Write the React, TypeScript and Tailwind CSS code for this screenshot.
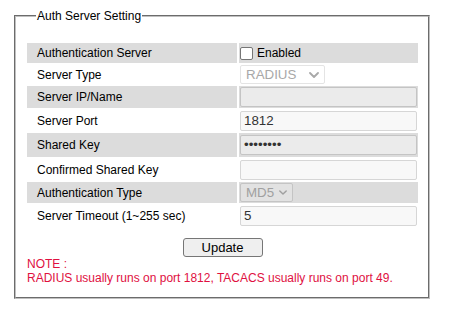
import React from "react";

const F = { fontFamily: '"Liberation Sans", Arial, sans-serif' };

function Chevron({ w, h, color }: { w: number; h: number; color: string }) {
  return (
    <svg width={w} height={h} viewBox="0 0 10 6" fill="none">
      <path d="M1 1 L5 5 L9 1" stroke={color} strokeWidth="1.8" strokeLinecap="round" strokeLinejoin="round" />
    </svg>
  );
}

function Row({
  label,
  h,
  gray,
  children,
}: {
  label: string;
  h: string;
  gray: boolean;
  children?: React.ReactNode;
}) {
  const bg = gray ? "bg-[#dcdcdc]" : "bg-white";
  return (
    <div className={`flex ${h}`}>
      <div className={`w-[210px] flex items-center pl-[10px] text-[12px] text-black ${bg}`}>{label}</div>
      <div className={`ml-[2px] w-[179px] flex items-center pl-[1px] ${bg}`}>{children}</div>
    </div>
  );
}

function TextBox({ value, disabled }: { value: string; disabled?: boolean }) {
  return (
    <div
      className={`w-[177px] h-[20px] flex items-center px-[3px] rounded-[2px] border text-[13.33px] text-[#333] ${
        disabled ? "bg-[#ebebeb] border-[#c4c4c4]" : "bg-[#f8f8f8] border-[#d6d6d6]"
      }`}
    >
      {value}
    </div>
  );
}

export default function App() {
  return (
    <div className="w-[451px] h-[321px] bg-white overflow-hidden" style={F}>
      <fieldset className="ml-[14px] mt-[9px] w-[416px] h-[290px] border-2 [border-style:groove] border-[#c0c0c0] pl-[11px] pr-[10px] pt-[20px]">
        <legend className="ml-[9px] px-[1px] text-[12px] leading-[14px] text-black">Auth Server Setting</legend>
        <div className="flex flex-col w-[391px]">
          <Row label="Authentication Server" h="h-[20px]" gray>
            <div className="flex items-center">
              <div className="w-[13px] h-[13px] border border-[#767676] rounded-[2px] bg-white" />
              <span className="ml-[4px] text-[12px] text-black">Enabled</span>
            </div>
          </Row>
          <Row label="Server Type" h="h-[23px]" gray={false}>
            <div className="w-[85px] h-[19px] flex items-center justify-between pl-[5px] pr-[5px] border border-[#e4e4e4] rounded-[2px] bg-white text-[13.33px] text-[#a8a8a8]">
              <span>RADIUS</span>
              <Chevron w={10} h={6} color="#a8a8a8" />
            </div>
          </Row>
          <Row label="Server IP/Name" h="h-[22px]" gray>
            <TextBox value="" disabled />
          </Row>
          <Row label="Server Port" h="h-[25px]" gray={false}>
            <TextBox value="1812" />
          </Row>
          <Row label="Shared Key" h="h-[24px]" gray>
            <TextBox value="••••••••" disabled />
          </Row>
          <Row label="Confirmed Shared Key" h="h-[25px]" gray={false}>
            <TextBox value="" />
          </Row>
          <Row label="Authentication Type" h="h-[21px]" gray>
            <div className="w-[53px] h-[19px] flex items-center justify-between pl-[5px] pr-[5px] border border-[#c4c4c4] rounded-[2px] bg-[#e2e2e2] text-[13.33px] text-[#a0a0a0]">
              <span>MD5</span>
              <Chevron w={8} h={5} color="#a0a0a0" />
            </div>
          </Row>
          <Row label="Server Timeout (1~255 sec)" h="h-[25px]" gray={false}>
            <TextBox value="5" />
          </Row>
          <div className="flex justify-center mt-[10px]">
            <button className="w-[80px] h-[19px] border border-[#767676] rounded-[3px] bg-[#efefef] text-[13px] leading-[17px] text-black">
              Update
            </button>
          </div>
          <div className="text-[12px] leading-[14px] text-[#e0103f] mt-0">
            <div>NOTE :</div>
            <div>RADIUS usually runs on port 1812, TACACS usually runs on port 49.</div>
          </div>
        </div>
      </fieldset>
    </div>
  );
}
